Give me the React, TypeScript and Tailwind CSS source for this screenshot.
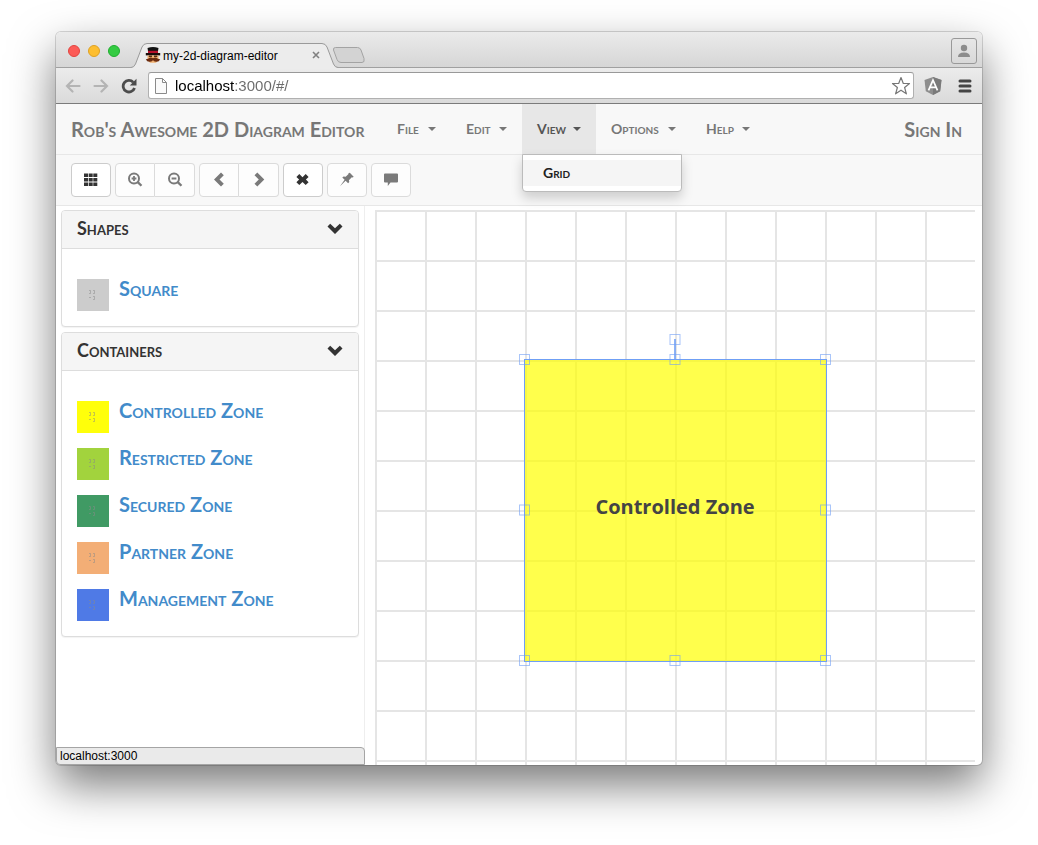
import type { ReactNode } from 'react';

const display = "font-['Lato','Open_Sans',sans-serif] [font-variant:small-caps]";

const zones = [
  { name: 'Controlled Zone', color: 'bg-[#ffff0a]' },
  { name: 'Restricted Zone', color: 'bg-[#a2d33d]' },
  { name: 'Secured Zone', color: 'bg-[#409a64]' },
  { name: 'Partner Zone', color: 'bg-[#f3ae76]' },
  { name: 'Management Zone', color: 'bg-[#4f7ae6]' },
];

function Favicon() {
  return (
    <svg width="16" height="16" viewBox="0 0 16 16" aria-hidden="true">
      <path d="M2.500 1Q8 -1 13.500 1L13 4H3z" fill="#111" />
      <path d="M3 3.800h10v3H3z" fill="#b80f2a" />
      <path d="M.8 6h14.400v2.400H.8z" fill="#1a0d0a" />
      <path d="M2.500 8.400h11V13L11 15.800H5L2.500 13z" fill="#f0b070" />
      <path d="M3.800 8.600h3.200v1.400H3.800zM9 8.600h3.200v1.400H9z" fill="#5a2c12" />
      <path d="M.8 12.200q1.700 0 2.700-.8Q5.500 9.600 8 11.200q2.500-1.600 4.500.2 1 .8 2.700.8-1 2.600-3.700 2.600Q9.500 14.800 8 13.300q-1.500 1.500-3.500 1.500-2.700 0-3.700-2.600z" fill="#6b2c10" />
    </svg>
  );
}

function BrowserTab() {
  return (
    <div className="relative flex h-6 w-[207px] items-center pr-[18px] pl-3.5">
      <svg className="absolute inset-0" width="207" height="26" viewBox="0 0 207 26" aria-hidden="true">
        <path d="M0 24.500Q3 24.500 4.500 21L11 4Q12.500.5 16 .5H191Q194.500.5 196 4L202.500 21Q204 24.500 207 24.500V26H0z" fill="#ececec" />
        <path d="M0 24.500Q3 24.500 4.500 21L11 4Q12.500.5 16 .5H191Q194.500.5 196 4L202.500 21Q204 24.500 207 24.500" fill="none" stroke="#9a9a9a" />
      </svg>
      <span className="relative flex min-w-0 flex-1 items-center gap-0.5">
        <Favicon />
        <span className="pt-0.5 text-[12px] leading-4 whitespace-nowrap text-black">my-2d-diagram-editor</span>
      </span>
      <button type="button" aria-label="Close tab" className="relative">
        <svg width="8" height="8" viewBox="0 0 8 8" aria-hidden="true">
          <path d="M1 1l6 6M7 1L1 7" stroke="#808080" strokeWidth="1.6" />
        </svg>
      </button>
    </div>
  );
}

function TitleBar() {
  return (
    <div className="flex h-9 items-end rounded-t-[5px] border-b border-[#a0a0a0] bg-linear-to-b from-[#ebebeb] to-[#d6d6d6]">
      <div className="flex gap-2 self-start pt-[13px] pl-3">
        <button type="button" aria-label="Close" className="size-3 rounded-full border border-[#e2443f] bg-[#fc5b57]" />
        <button type="button" aria-label="Minimize" className="size-3 rounded-full border border-[#dea123] bg-[#fdbe30]" />
        <button type="button" aria-label="Zoom" className="size-3 rounded-full border border-[#1fae2f] bg-[#34cb42]" />
      </div>
      <div className="ml-[11px] flex items-center">
        <BrowserTab />
        <button type="button" aria-label="New tab" className="-ml-1.5">
          <svg width="34" height="18" viewBox="0 0 34 18" aria-hidden="true">
            <path d="M3.500 1.500H25.500Q28 1.500 29 4L32 12.500Q33 16.500 30 16.500H9Q6 16.500 5 13.500L1.500 4Q1 1.500 3.500 1.500z" fill="#d3d3d3" stroke="#a3a3a3" />
          </svg>
        </button>
      </div>
      <button type="button" aria-label="Profile" className="mr-[5px] mb-[3px] ml-auto flex size-[26px] items-center justify-center rounded-[3px] border border-[#999]">
        <svg width="14" height="14" viewBox="0 0 14 14" fill="#8c8c8c" aria-hidden="true">
          <circle cx="7" cy="4" r="3.200" />
          <path d="M1 13q0-4.500 6-4.500t6 4.500z" />
        </svg>
      </button>
    </div>
  );
}

function AddressBar() {
  return (
    <div className="flex h-9 items-center border-b border-[#7b7b7b] bg-linear-to-b from-[#ececec] to-[#dadada] pr-2.5 pl-[9px]">
      <button type="button" aria-label="Back" className="mr-3">
        <svg width="16" height="14" viewBox="0 0 16 14" fill="none" stroke="#b4b4b4" strokeWidth="2.200" strokeLinecap="round" aria-hidden="true">
          <path d="M14.500 7H2M7.500 1.500L2 7l5.500 5.500" />
        </svg>
      </button>
      <button type="button" aria-label="Forward" className="mr-3">
        <svg width="16" height="14" viewBox="0 0 16 14" fill="none" stroke="#b4b4b4" strokeWidth="2.200" strokeLinecap="round" aria-hidden="true">
          <path d="M1.500 7H14M8.500 1.500L14 7l-5.500 5.500" />
        </svg>
      </button>
      <button type="button" aria-label="Reload" className="mr-[11px]">
        <svg width="16" height="16" viewBox="0 0 16 16" aria-hidden="true">
          <path d="M12.200 4.200A5.800 5.800 0 1 0 13.500 10" fill="none" stroke="#4c4c4c" strokeWidth="2.800" />
          <path d="M15.500.8v6.700H8.800z" fill="#4c4c4c" />
        </svg>
      </button>
      <div className="flex h-[27px] min-w-0 flex-1 items-center rounded-[3px] border border-[#b0b0b0] border-t-[#999] bg-white px-1.5">
        <svg width="12" height="16" viewBox="0 0 12 16" fill="#fafafa" stroke="#8a8a8a" aria-hidden="true">
          <path d="M.5.5H7.500l4 4v11H.5zM7.500.5v4h4" />
        </svg>
        <input
          aria-label="Address"
          defaultValue="localhost:3000/#/"
          className="ml-2 min-w-0 flex-1 bg-linear-to-r from-black from-[60px] to-[#6a6a6a] to-[60px] bg-clip-text text-[15px] leading-5 text-transparent outline-none"
        />
        <button type="button" aria-label="Bookmark this page" className="-mr-1">
          <svg width="20" height="20" viewBox="0 0 20 20" fill="#fff" stroke="#777" strokeWidth="1.200" strokeLinejoin="round" aria-hidden="true">
            <path d="M10 1.500l2.300 6h6.200l-4.900 4 1.800 6.300L10 14.200l-5.400 3.600 1.800-6.300-4.900-4h6.200z" />
          </svg>
        </button>
      </div>
      <button type="button" aria-label="AngularJS extension" className="ml-2.5">
        <svg width="18" height="18" viewBox="0 0 18 18" aria-hidden="true">
          <path d="M9 0l8.500 3-1.300 11.200L9 18l-7.200-3.800L.5 3z" fill="#8e8e8e" />
          <path d="M9 0l8.500 3-1.300 11.200L9 18z" fill="#7a7a7a" />
          <path d="M4.500 13.300L9 3.200l4.500 10.100M6 10.300h6" fill="none" stroke="#fff" strokeWidth="1.700" />
        </svg>
      </button>
      <button type="button" aria-label="Menu" className="ml-4">
        <svg width="14" height="14" viewBox="0 0 14 14" stroke="#444" strokeWidth="3" strokeLinecap="round" aria-hidden="true">
          <path d="M2 2h10M2 7h10M2 12h10" />
        </svg>
      </button>
    </div>
  );
}

function Menu({ label, width, open, children }: { label: string; width: string; open?: boolean; children?: ReactNode }) {
  return (
    <li className={`relative ${width}`}>
      <button
        type="button"
        aria-haspopup="menu"
        aria-expanded={!!open}
        className={`flex h-[50px] w-full items-center justify-between px-[15px] text-[14px] leading-5 font-bold ${open ? 'bg-[#e7e7e7] text-[#555]' : 'text-[#777]'} [font-variant:small-caps]`}
      >
        {label}
        <svg width="8" height="4" viewBox="0 0 8 4" fill="currentColor" aria-hidden="true">
          <path d="M0 0h8L4 4z" />
        </svg>
      </button>
      {children}
    </li>
  );
}

function NavBar() {
  return (
    <nav className={`flex h-[51px] items-center border-b border-[#e7e7e7] bg-[#f8f8f8] text-[#777] ${display}`}>
      <a href="#/" className="w-[326px] px-[15px] text-[20px] leading-5 font-bold whitespace-nowrap">
        Rob's Awesome 2D Diagram Editor
      </a>
      <ul className="flex">
        <Menu label="File" width="w-[69px]" />
        <Menu label="Edit" width="w-[71px]" />
        <Menu label="View" width="w-[74px]" open>
          <ul role="menu" className="absolute top-full left-0 z-10 w-40 rounded-b-[4px] border border-[#bbb] bg-white py-[5px] shadow-[0_6px_12px_rgba(0,0,0,0.175)]">
            <li role="none">
              <a role="menuitem" href="#/grid" className="block bg-[#f5f5f5] px-5 py-[3px] text-[14px] leading-5 font-bold text-[#222]">
                Grid
              </a>
            </li>
          </ul>
        </Menu>
        <Menu label="Options" width="w-[95px]" />
        <Menu label="Help" width="w-[74px]" />
      </ul>
      <a href="#/login" className="mr-5 ml-auto text-[20px] leading-5 font-bold">
        Sign In
      </a>
    </nav>
  );
}

function Tool({ label, active, place, children }: { label: string; active?: boolean; place?: 'left' | 'right'; children: ReactNode }) {
  const shape = place === 'left' ? 'rounded-l-[4px]' : place === 'right' ? 'rounded-r-[4px] border-l-0' : 'rounded-[4px]';
  return (
    <button
      type="button"
      aria-label={label}
      className={`flex h-[34px] w-10 items-center justify-center border ${shape} ${active ? 'border-[#ccc] bg-white text-[#333]' : 'border-[#dbdbdb] bg-[#fdfdfd] text-[#7a7a7a]'}`}
    >
      <svg width="16" height="16" viewBox="0 0 16 16" fill="currentColor" aria-hidden="true">
        {children}
      </svg>
    </button>
  );
}

function ToolBar() {
  return (
    <div className="flex h-[51px] items-center gap-1 border-b border-[#e7e7e7] bg-[#f8f8f8] px-[15px]">
      <Tool label="Grid" active>
        <path d="M1 1.500h4v3.500H1zM5.700 1.500h4v3.500h-4zM10.300 1.500h4v3.500h-4zM1 6h4v3.500H1zM5.700 6h4v3.500h-4zM10.300 6h4v3.500h-4zM1 10.500h4V14H1zM5.700 10.500h4V14h-4zM10.300 10.500h4V14h-4z" />
      </Tool>
      <div className="flex">
        <Tool label="Zoom in" place="left">
          <circle cx="7" cy="6.500" r="5" fill="none" stroke="currentColor" strokeWidth="2" />
          <path d="M4.600 5.600h1.500V4.100h1.800v1.500h1.500v1.800H7.900v1.500H6.100V7.400H4.600zM9.700 10.700l1.600-1.600 4 3.800-1.700 1.700z" />
        </Tool>
        <Tool label="Zoom out" place="right">
          <circle cx="7" cy="6.500" r="5" fill="none" stroke="currentColor" strokeWidth="2" />
          <path d="M4.600 5.600h4.800v1.800H4.600zM9.700 10.700l1.600-1.600 4 3.800-1.700 1.700z" />
        </Tool>
      </div>
      <div className="flex">
        <Tool label="Previous" place="left">
          <path d="M10 .6l2.800 2.700-4.300 4.200 4.300 4.200L10 14.400 3 7.500z" />
        </Tool>
        <Tool label="Next" place="right">
          <path d="M6.300.6L3.500 3.300l4.300 4.200-4.300 4.200 2.800 2.700 7-6.900z" />
        </Tool>
      </div>
      <Tool label="Delete" active>
        <path d="M4.300 2L7.500 5.200 10.700 2l2.900 2.900-2.700 2.600 2.700 2.700-2.900 2.900-3.200-3.200-3.200 3.200-2.900-2.900 2.700-2.700-2.700-2.600z" />
      </Tool>
      <Tool label="Pin">
        <path d="M10.800.8l3.900 3.900-1 .9-.9-.3-2.900 2.900.4 1.800-1.200 1.200-2.500-2.500L1 14.200l4.600-6.400-2.300-2.300 1.300-1.100 2.100.3 2.800-2.600-.1-.8z" />
      </Tool>
      <Tool label="Comment">
        <path d="M2 1.500h12q1 0 1 1v7q0 1-1 1H7.500L4.800 14v-3.500H2q-1 0-1-1v-7q0-1 1-1z" />
      </Tool>
    </div>
  );
}

function ShapeLink({ name, color }: { name: string; color: string }) {
  return (
    <li>
      <a href="#/" className="flex gap-2.5 text-[20px] leading-[18px] font-bold text-[#428bca]">
        <span className={`size-8 shrink-0 ${color}`}>
          <svg width="32" height="32" viewBox="0 0 32 32" fill="none" stroke="#8a8a8a" strokeOpacity=".5" aria-hidden="true">
            <path d="M12 11.500h1.500v3H12M16 11.500h1.500v3H16M12 18.500h2M16 17.500h1.500v3H16" />
          </svg>
        </span>
        {name}
      </a>
    </li>
  );
}

function Panel({ title, children }: { title: string; children: ReactNode }) {
  return (
    <section className="rounded-[4px] border border-[#ddd] bg-white shadow-[0_1px_1px_rgba(0,0,0,0.05)]">
      <h2 className="rounded-t-[3px] border-b border-[#ddd] bg-[#f5f5f5]">
        <button type="button" aria-expanded="true" className="flex h-[37px] w-full items-center justify-between px-[15px] pb-0.5 text-[18px] font-bold text-[#333] [font-variant:small-caps]">
          {title}
          <svg width="16" height="12" viewBox="0 0 16 12" fill="currentColor" aria-hidden="true">
            <path d="M.5 3.500L3.200.8 8 5.300 12.800.8l2.700 2.700L8 11z" />
          </svg>
        </button>
      </h2>
      <ul className="flex flex-col gap-[15px] px-[15px] pt-[30px] pb-[15px]">{children}</ul>
    </section>
  );
}

function Diagram() {
  const handles = [
    [149.5, 149.5],
    [450.5, 149.5],
    [149.5, 450.5],
    [450.5, 450.5],
    [300, 129.5],
    [300, 149.5],
    [149.5, 300],
    [450.5, 300],
    [300, 450.5],
  ];
  return (
    <svg className="h-full min-h-[500px] w-full" aria-label="Diagram">
      <defs>
        <pattern id="grid" width="50" height="50" patternUnits="userSpaceOnUse">
          <path d="M0 0h50v2H2v48H0z" fill="#e5e5e5" />
        </pattern>
      </defs>
      <rect width="100%" height="100%" fill="url(#grid)" />
      <rect x="150" y="150" width="301" height="301" fill="#ff0" fillOpacity=".7" />
      <text x="300" y="304" textAnchor="middle" fill="#444" className="font-['Open_Sans','Noto_Sans',sans-serif] text-[20px] font-bold">
        Controlled Zone
      </text>
      <g fill="none" stroke="#6f9ff5">
        <rect x="149.500" y="149.500" width="302" height="302" />
        <path d="M300 129v20" strokeWidth="2" strokeOpacity=".8" />
        {handles.map(([x, y]) => (
          <rect key={`${x}-${y}`} x={x - 5} y={y - 5} width="10" height="10" strokeOpacity=".6" />
        ))}
      </g>
    </svg>
  );
}

export default function App() {
  return (
    <div className="flex min-h-screen flex-col bg-white px-14 pt-8 pb-20 font-['Liberation_Sans',Arial,sans-serif]">
      <div className="relative flex flex-1 flex-col rounded-[5px] bg-white shadow-[0_0_0_1px_rgba(0,0,0,0.15),0_20px_45px_rgba(0,0,0,0.53)]">
        <TitleBar />
        <AddressBar />
        <NavBar />
        <ToolBar />
        <div className="flex flex-1">
          <aside className={`flex w-[309px] shrink-0 flex-col gap-[5px] border-r border-[#eee] px-[5px] pt-1 ${display}`}>
            <Panel title="Shapes">
              <ShapeLink name="Square" color="bg-[#ccc]" />
            </Panel>
            <Panel title="Containers">
              {zones.map((zone) => (
                <ShapeLink key={zone.name} {...zone} />
              ))}
            </Panel>
          </aside>
          <main className="min-w-0 flex-1 pt-1 pr-[7px] pl-2.5">
            <Diagram />
          </main>
        </div>
        <div className="absolute bottom-0 left-0 flex h-[18px] w-[309px] items-center rounded-tr-[4px] rounded-bl-[4px] border border-[#a5a5a5] bg-[#eaeaea] px-[3px] text-[12px] text-black">
          localhost:3000
        </div>
      </div>
    </div>
  );
}
